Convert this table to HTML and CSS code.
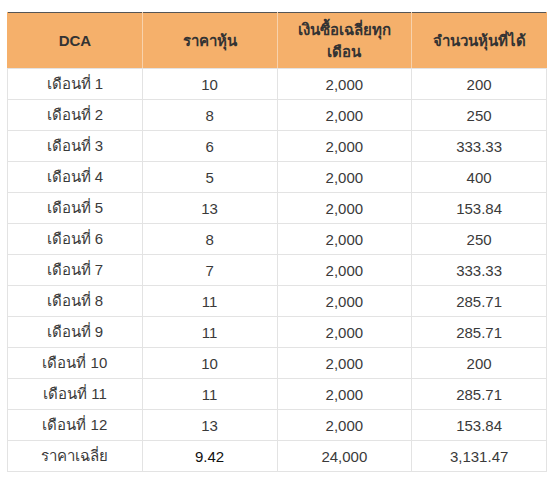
FILE: index.html
```html
<!DOCTYPE html>
<html lang="th">
<head>
<meta charset="utf-8">
<link rel="stylesheet" href="styles.css">
</head>
<body>
<table class="dca">
  <thead>
    <tr>
      <th>DCA</th>
      <th>ราคาหุ้น</th>
      <th>เงินซื้อเฉลี่ยทุกเดือน</th>
      <th>จำนวนหุ้นที่ได้</th>
    </tr>
  </thead>
  <tbody>
    <tr><td>เดือนที่ 1</td><td>10</td><td>2,000</td><td>200</td></tr>
    <tr><td>เดือนที่ 2</td><td>8</td><td>2,000</td><td>250</td></tr>
    <tr><td>เดือนที่ 3</td><td>6</td><td>2,000</td><td>333.33</td></tr>
    <tr><td>เดือนที่ 4</td><td>5</td><td>2,000</td><td>400</td></tr>
    <tr><td>เดือนที่ 5</td><td>13</td><td>2,000</td><td>153.84</td></tr>
    <tr><td>เดือนที่ 6</td><td>8</td><td>2,000</td><td>250</td></tr>
    <tr><td>เดือนที่ 7</td><td>7</td><td>2,000</td><td>333.33</td></tr>
    <tr><td>เดือนที่ 8</td><td>11</td><td>2,000</td><td>285.71</td></tr>
    <tr><td>เดือนที่ 9</td><td>11</td><td>2,000</td><td>285.71</td></tr>
    <tr><td>เดือนที่ 10</td><td>10</td><td>2,000</td><td>200</td></tr>
    <tr><td>เดือนที่ 11</td><td>11</td><td>2,000</td><td>285.71</td></tr>
    <tr><td>เดือนที่ 12</td><td>13</td><td>2,000</td><td>153.84</td></tr>
    <tr><td>ราคาเฉลี่ย</td><td class="strong">9.42</td><td>24,000</td><td>3,131.47</td></tr>
  </tbody>
</table>
</body>
</html>
```
FILE: styles.css
```css
html, body {
  margin: 0;
  padding: 0;
  background: #ffffff;
}
body {
  padding: 12px 0 0 7px;
  font-family: "Liberation Sans", Arial, sans-serif;
  font-size: 15px;
  color: #333333;
}
.dca {
  border-collapse: collapse;
  width: 540px;
  table-layout: fixed;
}
.dca thead tr {
  border-top: 1px solid #555555;
}
.dca th {
  background: #f5b06b;
  color: #333333;
  font-weight: bold;
  height: 55px;
  padding: 0 8px;
  line-height: 22px;
  text-align: center;
  vertical-align: middle;
  border-left: 1px solid #f8d2ac;
  border-right: 1px solid #f8d2ac;
  border-bottom: 1px solid #e3e3e3;
}
.dca th:first-child { border-left-color: #f5b06b; }
.dca th:last-child { border-right-color: #f5b06b; }
.dca td {
  height: 30px;
  padding: 0 6px;
  text-align: center;
  vertical-align: middle;
  border: 1px solid #e3e3e3;
  color: #3a3a3a;
}
.dca td.strong {
  color: #111111;
}
```
